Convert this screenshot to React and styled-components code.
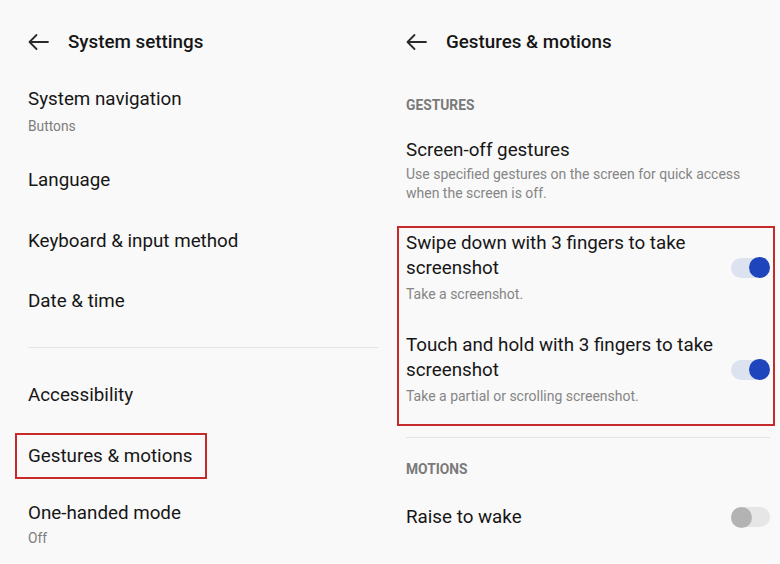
import React from "react";
import styled, { createGlobalStyle } from "styled-components";

const Global = createGlobalStyle`
  html, body { margin: 0; padding: 0; background: #f9f9f9; }
  body { font-family: Roboto, "Noto Sans", "Liberation Sans", sans-serif; color: #161616; }
  * { box-sizing: border-box; }
`;

const Page = styled.div`
  display: flex;
  width: 780px;
  height: 564px;
  overflow: hidden;
  background: #f9f9f9;
`;

const Column = styled.div`
  display: flex;
  flex-direction: column;
  width: ${(p) => p.$width}px;
  padding: 0 ${(p) => p.$padRight}px 0 28px;
`;

const Header = styled.div`
  display: flex;
  align-items: center;
  height: 84px;
  gap: 19px;
  margin-left: -1px;
`;

const Title = styled.div`
  font-size: 18.8px;
  font-weight: 500;
  color: #161616;
`;

const Item = styled.div`
  display: flex;
  flex-direction: column;
  justify-content: center;
  height: ${(p) => p.$h}px;
  padding-top: ${(p) => p.$pt || 0}px;
`;

const ItemTitle = styled.div`
  font-size: 18.8px;
  line-height: 24px;
  color: #161616;
  margin-top: ${(p) => p.$mt || 0}px;
`;

const ItemSub = styled.div`
  font-size: 13.8px;
  line-height: 18px;
  color: #7d7d7d;
  margin-top: ${(p) => p.$mt}px;
`;

const Divider = styled.div`
  height: 1px;
  background: #e3e3e3;
  margin: ${(p) => p.$m};
`;

const Highlight = styled.div`
  display: ${(p) => (p.$inline ? "inline-flex" : "flex")};
  flex-direction: column;
  align-self: flex-start;
  border: 2px solid #c62a2a;
  ${(p) => p.$css}
`;

const Section = styled.div`
  font-size: 13.8px;
  font-weight: 700;
  line-height: 18px;
  color: #7a7a7a;
  margin-top: ${(p) => p.$mt}px;
`;

const Desc = styled.div`
  font-size: 14px;
  line-height: 19px;
  color: #858585;
  margin-top: ${(p) => p.$mt || 3}px;
`;

const ToggleRow = styled.div`
  display: flex;
  align-items: center;
  justify-content: space-between;
  gap: 10px;
  margin-top: ${(p) => p.$mt || 0}px;
`;

const RowText = styled.div`
  display: flex;
  flex-direction: column;
  max-width: 316px;
`;

const WrapTitle = styled.div`
  font-size: 18.8px;
  line-height: 25px;
  color: #161616;
`;

const Track = styled.div`
  position: relative;
  flex: none;
  width: 39px;
  height: 20px;
  border-radius: 10px;
  background: ${(p) => (p.$on ? "#dde2f1" : "#e6e6e6")};
`;

const Thumb = styled.div`
  position: absolute;
  top: -0.5px;
  ${(p) => (p.$on ? "right: 0;" : "left: 0;")}
  width: 21px;
  height: 21px;
  border-radius: 50%;
  background: ${(p) => (p.$on ? "#1f45bd" : "#b3b3b3")};
`;

const Back = () => (
  <svg width="22" height="22" viewBox="0 0 22 22" fill="none">
    <path d="M21 11H2.5M9.5 4L2.5 11l7 7" stroke="#2a2a2a" strokeWidth="1.8" strokeLinecap="round" strokeLinejoin="round" />
  </svg>
);

const Toggle = ({ on }) => (
  <Track $on={on}>
    <Thumb $on={on} />
  </Track>
);

export default function App() {
  return (
    <Page>
      <Global />
      <Column $width={378} $padRight={0}>
        <Header>
          <Back />
          <Title>System settings</Title>
        </Header>
        <Item $h={66}>
          <ItemTitle $mt={-12}>System navigation</ItemTitle>
          <ItemSub $mt={6}>Buttons</ItemSub>
        </Item>
        <Item $h={60}>
          <ItemTitle>Language</ItemTitle>
        </Item>
        <Item $h={61}>
          <ItemTitle>Keyboard &amp; input method</ItemTitle>
        </Item>
        <Item $h={60}>
          <ItemTitle>Date &amp; time</ItemTitle>
        </Item>
        <Divider $m="16px 0 17px" />
        <Item $h={60}>
          <ItemTitle>Accessibility</ItemTitle>
        </Item>
        <Item $h={60}>
          <Highlight $inline $css="margin-left: -13px; padding: 0 13px 0 11px; height: 46px; justify-content: center; margin-top: 1px;">
            <ItemTitle>Gestures &amp; motions</ItemTitle>
          </Highlight>
        </Item>
        <Item $h={62} $pt={16}>
          <ItemTitle>One-handed mode</ItemTitle>
          <ItemSub $mt={4}>Off</ItemSub>
        </Item>
      </Column>

      <Column $width={402} $padRight={10}>
        <Header>
          <Back />
          <Title>Gestures &amp; motions</Title>
        </Header>
        <Section $mt={12}>GESTURES</Section>
        <ItemTitle $mt={24}>Screen-off gestures</ItemTitle>
        <Desc>Use specified gestures on the screen for quick access when the screen is off.</Desc>
        <Highlight $css="align-self: stretch; margin: 23px -5px 0 -9px; padding: 3px 3px 18px 7px;">
          <ToggleRow>
            <RowText>
              <WrapTitle>Swipe down with 3 fingers to take screenshot</WrapTitle>
              <Desc $mt={4}>Take a screenshot.</Desc>
            </RowText>
            <Toggle on />
          </ToggleRow>
          <ToggleRow $mt={29}>
            <RowText>
              <WrapTitle>Touch and hold with 3 fingers to take screenshot</WrapTitle>
              <Desc $mt={4}>Take a partial or scrolling screenshot.</Desc>
            </RowText>
            <Toggle on />
          </ToggleRow>
        </Highlight>
        <Divider $m="11px 0 0" />
        <Section $mt={22}>MOTIONS</Section>
        <ToggleRow $mt={27}>
          <ItemTitle>Raise to wake</ItemTitle>
          <Toggle on={false} />
        </ToggleRow>
      </Column>
    </Page>
  );
}
